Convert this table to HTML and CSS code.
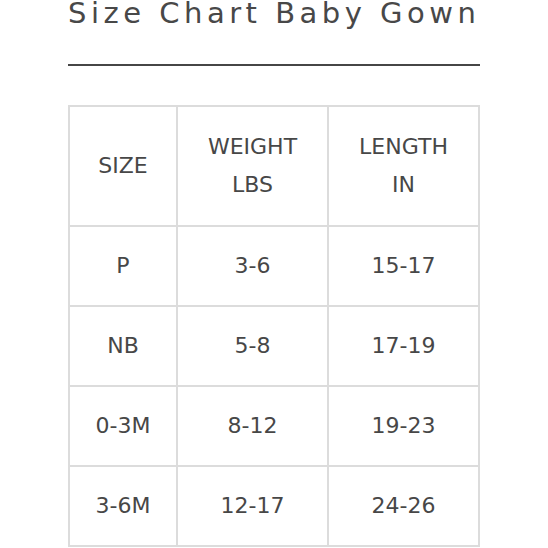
FILE: index.html
```html
<!DOCTYPE html>
<html>
<head>
<meta charset="utf-8">
<link rel="stylesheet" href="styles.css">
</head>
<body>
<div class="page">
  <h1 class="title">Size Chart Baby Gown</h1>
  <div class="rule"></div>
  <table class="chart">
    <colgroup>
      <col class="c1"><col class="c2"><col class="c3">
    </colgroup>
    <tr class="head">
      <td>SIZE</td>
      <td>WEIGHT<br>LBS</td>
      <td>LENGTH<br>IN</td>
    </tr>
    <tr><td>P</td><td>3-6</td><td>15-17</td></tr>
    <tr><td>NB</td><td>5-8</td><td>17-19</td></tr>
    <tr><td>0-3M</td><td>8-12</td><td>19-23</td></tr>
    <tr><td>3-6M</td><td>12-17</td><td>24-26</td></tr>
  </table>
</div>
</body>
</html>
```
FILE: styles.css
```css
html, body {
  margin: 0;
  padding: 0;
  background: #fff;
}
.page {
  width: 412px;
  margin: 0 auto;
  font-family: "DejaVu Sans", sans-serif;
  color: #474747;
}
.title {
  margin: 0;
  font-size: 29px;
  font-weight: normal;
  letter-spacing: 4.5px;
  line-height: 26px;
  white-space: nowrap;
  color: #484848;
}
.rule {
  height: 2px;
  background: #464646;
  margin-top: 38px;
}
.chart {
  margin-top: 39px;
  border-collapse: collapse;
  table-layout: fixed;
  width: 412px;
}
.c1 { width: 108px; }
.c2 { width: 151px; }
.c3 { width: 151px; }
.chart td {
  border: 2px solid #dcdcdc;
  text-align: center;
  vertical-align: middle;
  font-size: 22px;
  height: 78px;
  padding: 0;
  line-height: 38px;
}
.chart tr.head td {
  height: 118px;
}
```
